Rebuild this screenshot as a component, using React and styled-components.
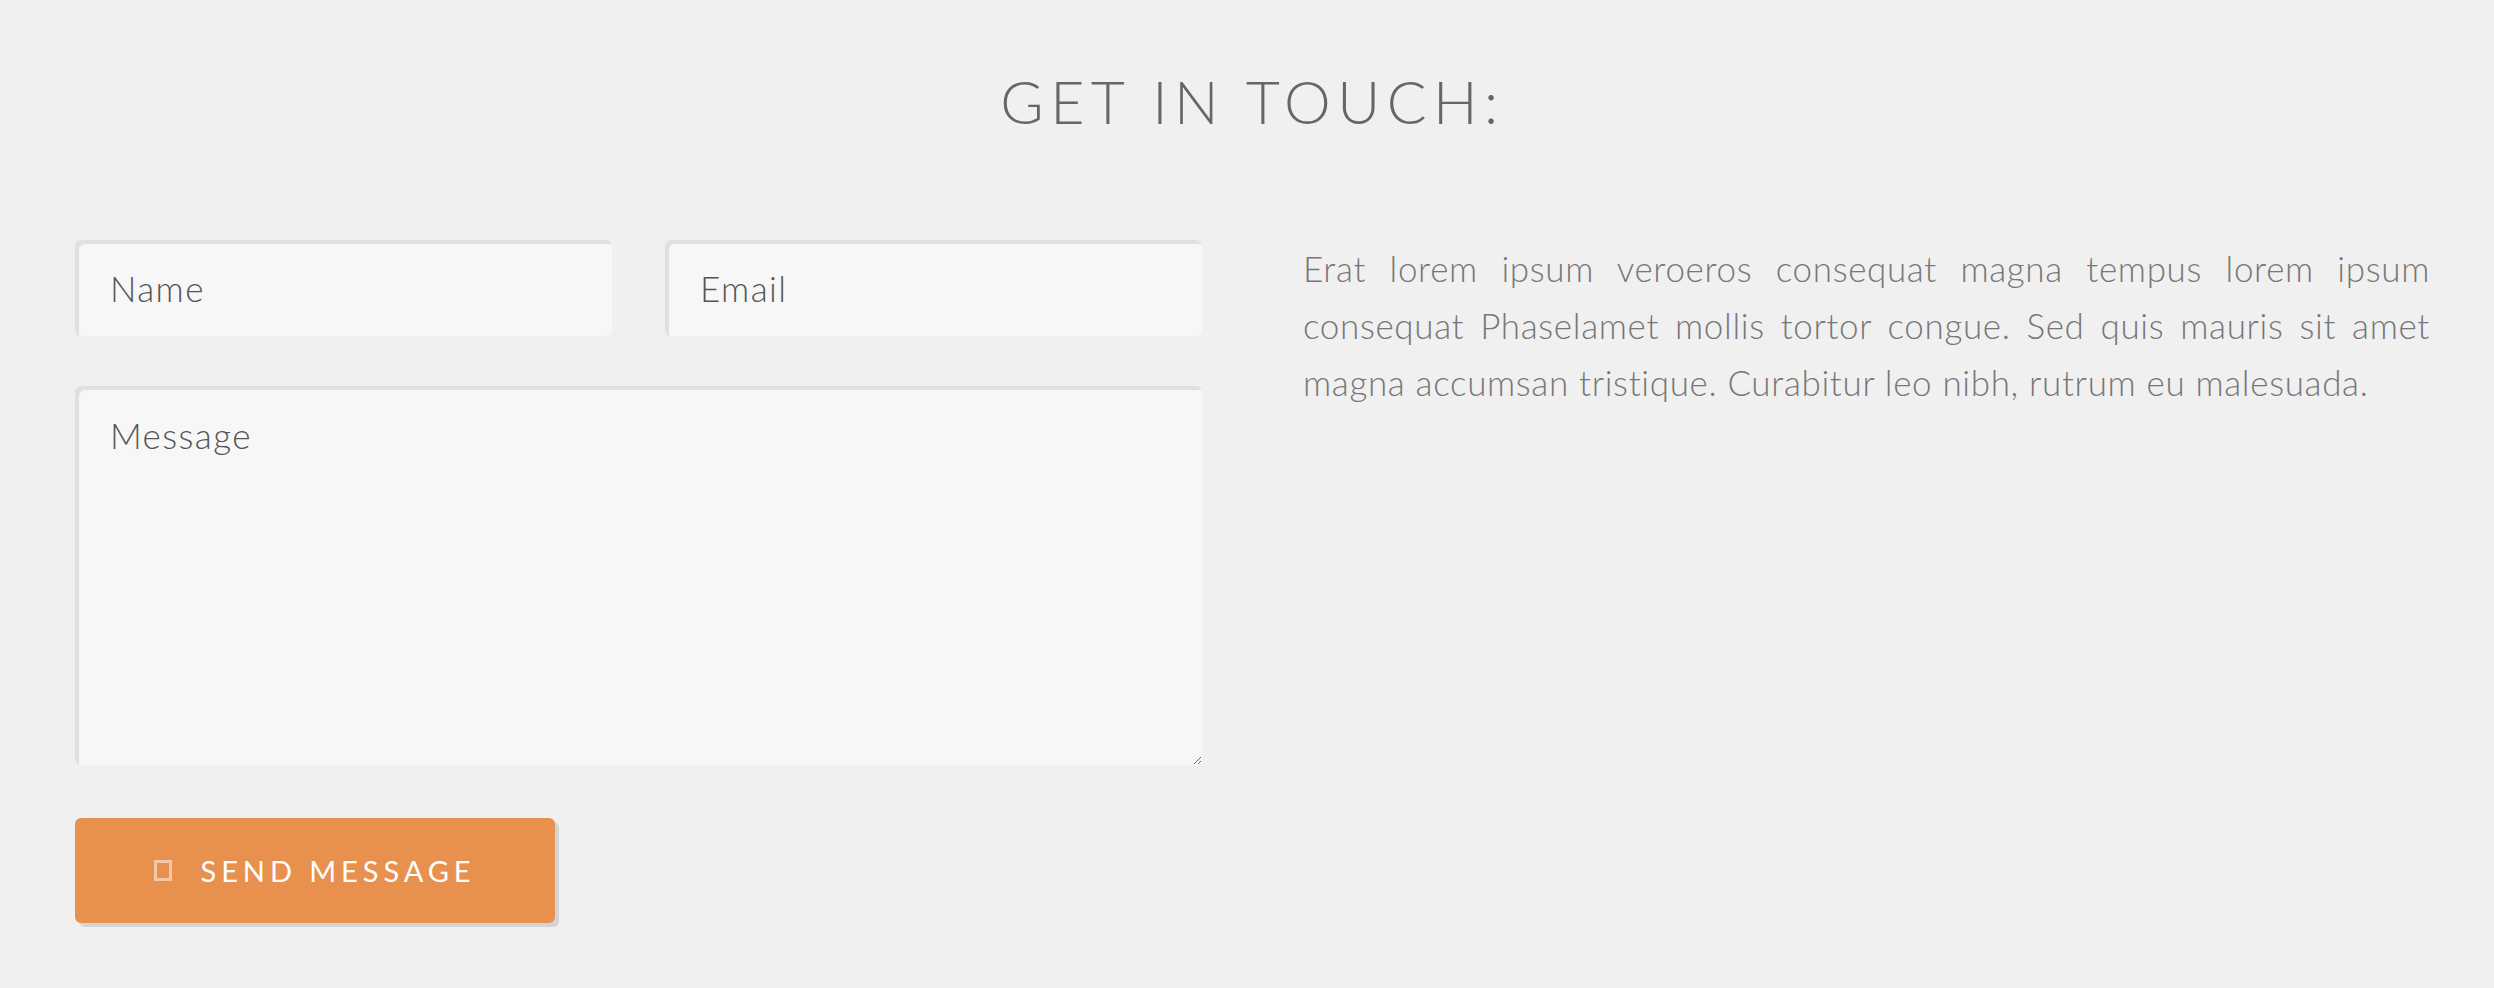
import React from "react";
import styled, { createGlobalStyle } from "styled-components";

const GlobalStyle = createGlobalStyle`
  html, body {
    margin: 0;
    padding: 0;
    background: #f0f0f0;
  }
  body {
    font-family: Lato, "Open Sans", sans-serif;
    font-weight: 300;
  }
`;

const Page = styled.section`
  padding: 67px 64px 60px 75px;
`;

const Title = styled.h2`
  margin: 0 0 102px 0;
  text-align: center;
  font-size: 59px;
  line-height: 1.2;
  font-weight: 300;
  letter-spacing: 0.11em;
  color: #666;
  text-transform: uppercase;
`;

const Columns = styled.div`
  display: grid;
  grid-template-columns: 1fr 1fr;
  column-gap: 101px;
  align-items: start;
`;

const Form = styled.form`
  display: flex;
  flex-direction: column;
  gap: 50px;
`;

const Row = styled.div`
  display: grid;
  grid-template-columns: 1fr 1fr;
  column-gap: 53px;
`;

const fieldStyle = `
  box-sizing: border-box;
  width: 100%;
  border: none;
  outline: none;
  border-radius: 6px;
  background: #f7f7f7;
  box-shadow: inset 4px 4px 0 #e0e0e0;
  font-family: Lato, "Open Sans", sans-serif;
  font-weight: 300;
  font-size: 35px;
  letter-spacing: 0.04em;
  color: #555;
  &::placeholder {
    color: #555;
    opacity: 1;
  }
`;

const Input = styled.input`
  ${fieldStyle}
  height: 96px;
  padding: 0 35px;
`;

const TextArea = styled.textarea`
  ${fieldStyle}
  display: block;
  height: 379px;
  padding: 28px 35px;
  resize: vertical;
  line-height: 1.2;
`;

const Actions = styled.div`
  display: flex;
  margin-top: 3px;
`;

const Button = styled.button`
  display: flex;
  align-items: center;
  justify-content: center;
  gap: 28px;
  width: 480px;
  height: 105px;
  border: none;
  border-radius: 6px;
  background: #e8914f;
  box-shadow: 4px 4px 0 #d4d4d4;
  color: #fff;
  font-family: Lato, "Open Sans", sans-serif;
  font-weight: 400;
  font-size: 29px;
  letter-spacing: 0.17em;
  text-transform: uppercase;
  cursor: pointer;
  padding: 0;
`;

const IconBox = styled.span`
  box-sizing: border-box;
  display: inline-block;
  width: 18px;
  height: 21px;
  border: 3px solid rgba(255, 255, 255, 0.5);
`;

const Text = styled.p`
  margin: 0;
  font-size: 35px;
  line-height: 57px;
  font-weight: 300;
  letter-spacing: 0.65px;
  color: #777;
  text-align: justify;
`;

export default function App() {
  return (
    <Page>
      <GlobalStyle />
      <Title>Get in touch:</Title>
      <Columns>
        <Form onSubmit={(e) => e.preventDefault()}>
          <Row>
            <Input type="text" name="name" placeholder="Name" />
            <Input type="email" name="email" placeholder="Email" />
          </Row>
          <TextArea name="message" placeholder="Message" />
          <Actions>
            <Button type="submit">
              <IconBox />
              <span>Send Message</span>
            </Button>
          </Actions>
        </Form>
        <Text>
          Erat lorem ipsum veroeros consequat magna tempus lorem ipsum consequat
          Phaselamet mollis tortor congue. Sed quis mauris sit amet magna
          accumsan tristique. Curabitur leo nibh, rutrum eu malesuada.
        </Text>
      </Columns>
    </Page>
  );
}
